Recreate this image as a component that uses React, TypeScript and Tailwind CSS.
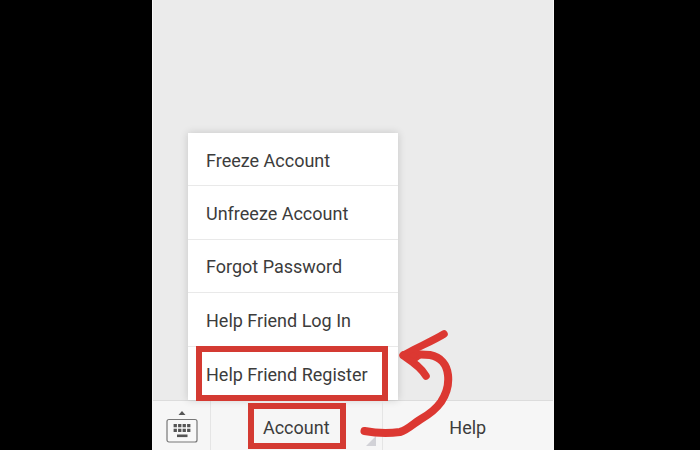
const menuItems = [
  { label: "Freeze Account" },
  { label: "Unfreeze Account" },
  { label: "Forgot Password" },
  { label: "Help Friend Log In" },
  { label: "Help Friend Register", marked: true },
];

const KeyboardIcon = () => (
  <svg width="34" height="34" viewBox="0 0 34 34" aria-hidden="true">
    <path d="M17 1 20.500 5H13.500Z" fill="#555" />
    <rect
      x="2"
      y="9.500"
      width="30"
      height="22.500"
      rx="2"
      fill="#f8f8f8"
      stroke="#777"
      strokeWidth="1.2"
    />
    <g fill="#555">
      <path d="M8.600 14h3.300v3.200H8.600zM13.100 14h3.300v3.200h-3.300zM17.600 14h3.300v3.200h-3.300zM22.100 14h3.300v3.200h-3.300z" />
      <path d="M8.600 18.700h3.300v3.200H8.600zM13.100 18.700h3.300v3.200h-3.300zM17.600 18.700h3.300v3.200h-3.300zM22.100 18.700h3.300v3.200h-3.300z" />
      <path d="M12 24.500h10.500v2.600H12z" />
    </g>
  </svg>
);

const Arrow = () => (
  <svg
    className="pointer-events-none absolute -top-[76px] left-[149px] z-20"
    width="100"
    height="120"
    viewBox="360 325 100 120"
    fill="none"
    stroke="#dc3832"
    strokeLinecap="round"
    strokeLinejoin="round"
    aria-hidden="true"
  >
    <path
      d="M364.500 431C375 433 389 433.500 400 432C408 430 414 423 421 419C428 415 436 409 441 402C447 393 449 384 448 375C447 365 441 357 430 355C421 354 412 355 404 355"
      strokeWidth="8"
    />
    <path d="M444 334C436 339 425 344 415 349L403 355.500C411 361 420 366 426 376" strokeWidth="7.500" />
    <path d="M403 355 414 350 422 355 414 361Z" fill="#dc3832" strokeWidth="4" />
  </svg>
);

const AccountMenu = () => (
  <ul className="relative grid h-[267px] w-[210px] grid-rows-5 bg-white shadow-[0_0_8px_rgba(0,0,0,0.16)]">
    {menuItems.map((item) => (
      <li
        key={item.label}
        className="relative border-b border-[#e9e9e9] last:border-b-0"
      >
        <button
          type="button"
          className="h-full w-full pt-[3px] pl-[18px] text-left text-lg whitespace-nowrap"
        >
          {item.label}
        </button>
        {item.marked && (
          <span className="pointer-events-none absolute -inset-y-px right-2.5 left-2 z-10 border-6 border-[#d43a32]" />
        )}
      </li>
    ))}
  </ul>
);

const BottomBar = () => (
  <nav className="flex h-[50px] border-t border-[#dcdcdc] bg-[#f6f6f6]">
    <button
      type="button"
      aria-label="Keyboard"
      className="flex w-[58px] items-center justify-center border-r border-[#e5e5e5] pt-0.5"
    >
      <KeyboardIcon />
    </button>
    <div className="relative flex-1 border-r border-[#e5e5e5]">
      <button type="button" className="h-full w-full pt-1 text-lg">
        Account
      </button>
      <span className="pointer-events-none absolute top-0.5 right-9 bottom-px left-[37px] border-6 border-[#d43a32]" />
      <svg
        className="absolute right-1.5 bottom-1"
        width="10"
        height="10"
        viewBox="0 0 10 10"
        aria-hidden="true"
      >
        <path d="M10 0V10H0Z" fill="#d2d2d7" />
      </svg>
      <Arrow />
    </div>
    <button type="button" className="flex-1 pt-1 text-lg">
      Help
    </button>
  </nav>
);

const App = () => {
  return (
    <main className="flex min-h-screen bg-black pr-[146px] pl-[152px] font-['Roboto',sans-serif] text-[#3c3c3c]">
      <div className="flex flex-1 flex-col border-x border-[#f8f8f8] bg-[#ebebeb]">
        <div className="flex flex-1 items-end pl-[35px]">
          <AccountMenu />
        </div>
        <BottomBar />
      </div>
    </main>
  );
};

export default App;
